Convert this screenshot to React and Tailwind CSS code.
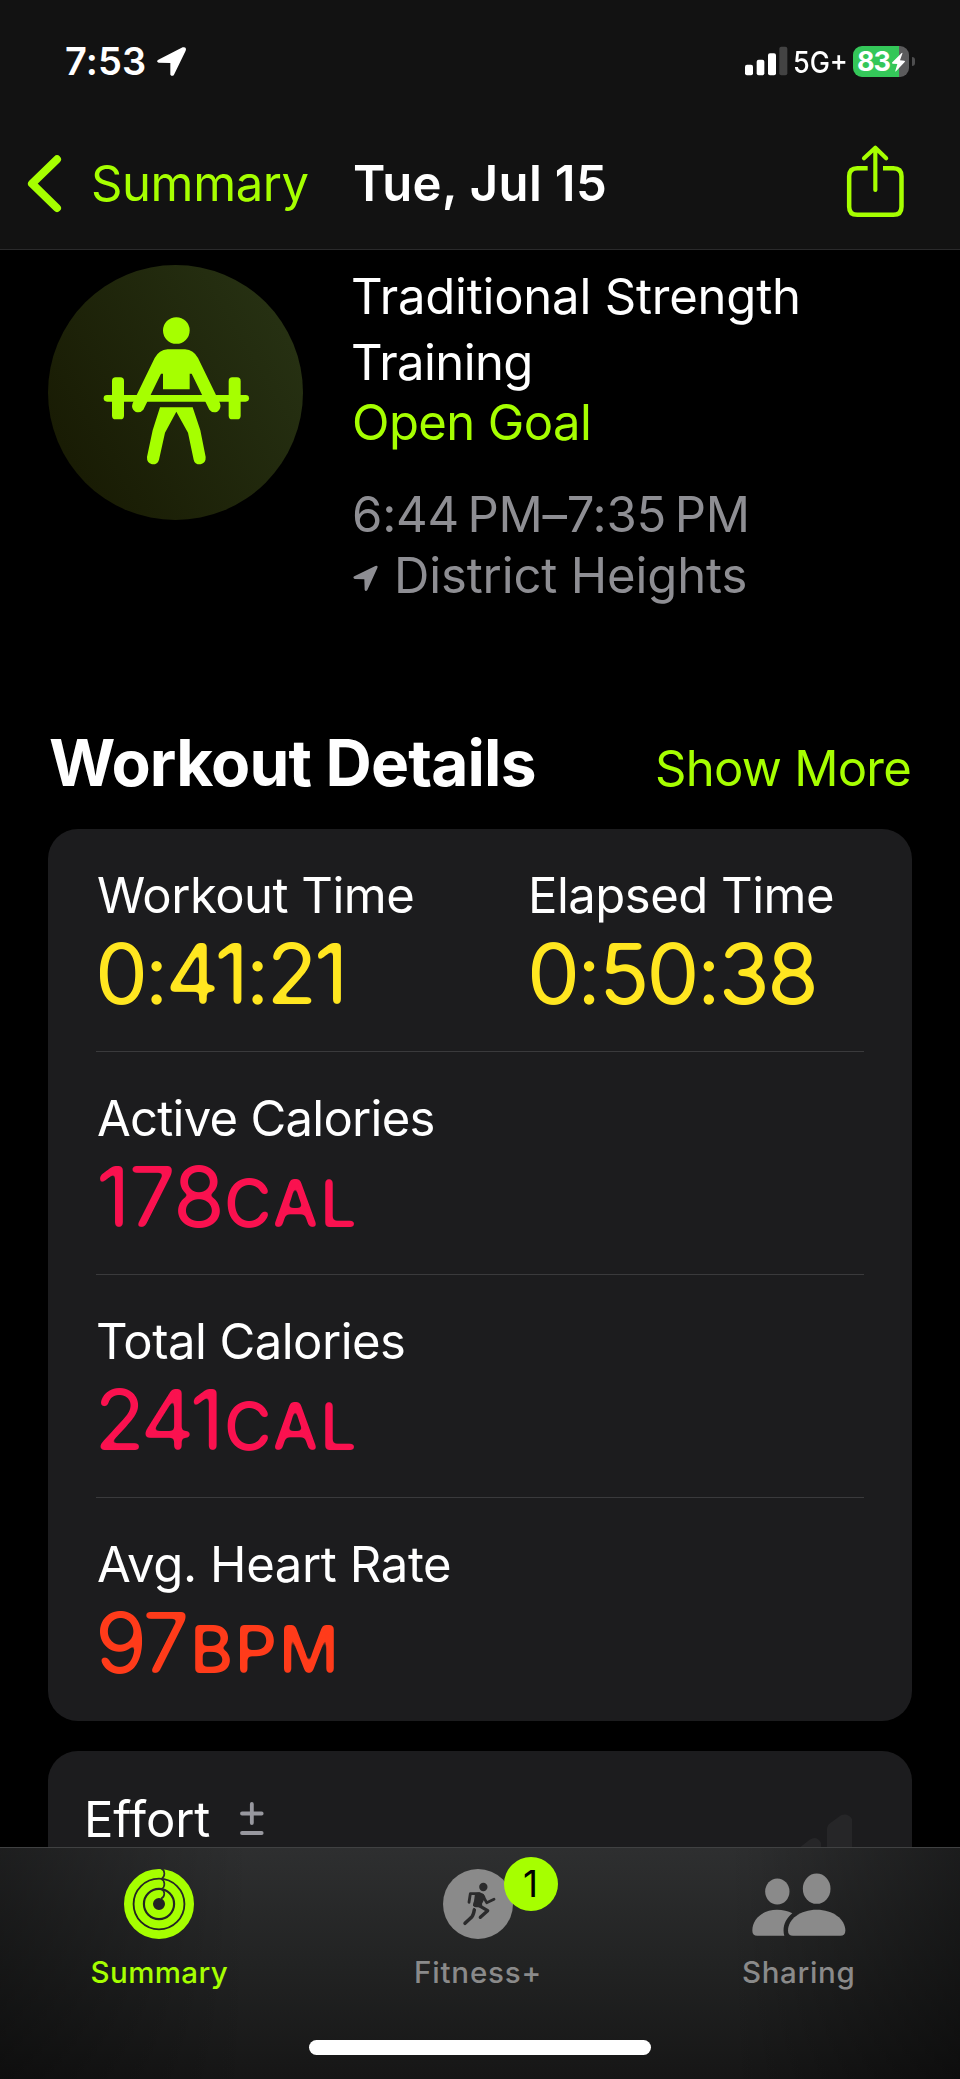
import React from "react";

/* Softens the corners of large glyphs into a rounded numeral style. */
function RoundedGlyphFilter() {
  return (
    <svg width="0" height="0" className="absolute" aria-hidden="true">
      <filter id="rounded" x="-5%" y="-10%" width="110%" height="120%" colorInterpolationFilters="sRGB">
        <feGaussianBlur stdDeviation="2.2" />
        <feComponentTransfer>
          <feFuncA type="linear" slope="6" intercept="-2.45" />
        </feComponentTransfer>
      </filter>
    </svg>
  );
}

function StatusBar() {
  return (
    <div className="flex h-[122px] items-center justify-between pr-[45px] pl-[65px]">
      <div className="flex items-center">
        <span className="text-[38px] leading-[48px] font-semibold tracking-[0.1px]">7:53</span>
        <svg className="ml-[10px]" width="31" height="31" viewBox="468 138 93 93" fill="#fff">
          <path d="M475 179 L548 142 Q561 139 557 152 L522 224 Q517 231 511 224 L511 189 L476 188 Q467 184 475 179Z" />
        </svg>
      </div>
      <div className="flex items-center">
        <svg width="43" height="31" viewBox="792 137 129 93" fill="#fff">
          <rect x="792" y="193" width="24" height="32" rx="6" />
          <rect x="827" y="178" width="23" height="47" rx="6" />
          <rect x="861" y="159" width="24" height="66" rx="6" />
          <rect x="895" y="139" width="24" height="86" rx="6" fill="#434343" />
        </svg>
        <span className="ml-[5px] w-[60px] origin-left scale-x-90 pt-[2px] text-[30px] leading-[48px] font-medium tracking-[0px]">5G+</span>
        <div className="relative flex h-[31px] w-[56px] items-center overflow-hidden rounded-[9px] bg-[linear-gradient(90deg,#34c759_0_46px,#5b5b5c_46px)]">
          <span className="pl-[4px] text-[27px] leading-[31px] font-bold tracking-[-1px]">83</span>
          <svg className="absolute top-[6px] left-[38px]" width="15" height="20" viewBox="1235 154 45 60" fill="#fff">
            <path d="M1267 157 Q1270 155 1269 159 L1262 179 L1275 180 Q1279 181 1276 184 L1250 212 Q1247 214 1248 210 L1254 190 L1240 189 Q1236 188 1239 185Z" />
          </svg>
        </div>
        <span className="ml-[3px] h-[9px] w-[3px] rounded-r-full bg-[#4e4e4f]" />
      </div>
    </div>
  );
}

function NavBar() {
  return (
    <div className="flex h-[122px] items-center pl-[27px]">
      <svg width="35" height="59" viewBox="81 459 105 177" fill="none" stroke="#a6ff00" strokeWidth="24" strokeLinecap="round" strokeLinejoin="round">
        <path d="M171 475 L96 548 L171 621" />
      </svg>
      <span className="ml-[29px] w-[262px] pt-[2px] text-[49px] leading-[60px] tracking-[-0.4px] whitespace-nowrap text-[#a6ff00]">Summary</span>
      <h1 className="flex-1 pt-[2px] text-[49px] leading-[60px] font-semibold tracking-[0.4px] whitespace-nowrap">Tue, Jul 15</h1>
      <svg className="mr-[55px] mb-1" width="59" height="75" viewBox="1098 432 177 225" fill="none" stroke="#a6ff00" strokeWidth="13.5" strokeLinejoin="round">
        <path d="M1163 504.500 H1132 Q1107.500 504.500 1107.500 529 V620 Q1107.500 644.500 1132 644.500 H1240 Q1264.500 644.500 1264.500 620 V529 Q1264.500 504.500 1240 504.500 H1209" />
        <path strokeLinecap="round" strokeWidth="12.500" d="M1186 570 V446 M1152 475 L1186 443 L1218.500 475" />
      </svg>
    </div>
  );
}

function LifterBadge() {
  return (
    <svg className="mt-[2px] shrink-0" width="255" height="255" viewBox="54 44 765 765" fill="#a6ff00">
      <defs>
        <linearGradient id="disc" x1="0.08" y1="0.75" x2="0.92" y2="0.25">
          <stop offset="0" stopColor="#191c04" />
          <stop offset="1" stopColor="#263012" />
        </linearGradient>
      </defs>
      <circle cx="436.500" cy="426.500" r="382.500" fill="url(#disc)" />
      <circle cx="439" cy="240.500" r="40" />
      <path d="M413 297 H465 Q491 299 504 323 L570 459 Q575 475 562 484 Q548 490 538 478 L485 370 H479 V417 H399 V370 H393 L340 478 Q330 490 316 484 Q302 475 308 459 L374 323 Q387 299 413 297Z" />
      <rect x="221" y="434" width="436" height="20" rx="10" />
      <rect x="246" y="381" width="36" height="126" rx="11" />
      <rect x="596" y="381" width="36" height="126" rx="11" />
      <path d="M390 471 H488 L511 540 L527 620 Q528 638 512 642 Q494 643 491 628 L474 547 L439 484 L405 547 L387 628 Q383 643 366 642 Q350 638 351 620 L368 540Z" />
    </svg>
  );
}

function Hero() {
  return (
    <section className="flex h-[355px] gap-[50px] pt-[13px] pl-[48px]">
      <LifterBadge />
      <div className="flex flex-col pt-px text-[49px] whitespace-nowrap">
        <h2 className="-ml-[2px] leading-[66px] tracking-[-0.2px]">
          Traditional Strength
          <br />
          <span className="tracking-[-0.6px]">Training</span>
        </h2>
        <p className="-ml-[1px] leading-[54px] tracking-[-0.59px] text-[#a6ff00]">Open Goal</p>
        <p className="mt-[35px] -ml-[1px] leading-[60px] tracking-[-0.25px] text-[#8e8e93]">6:44{"\u202f"}PM–7:35{"\u202f"}PM</p>
        <p className="flex items-center pt-px leading-[60px] tracking-[-0.13px] text-[#8e8e93]">
          <svg className="mt-[4px] mr-[16px]" width="25" height="27" viewBox="70 942 75 81" fill="#8e8e93">
            <path d="M74 976 L137 945 Q146 942 143 951 L113 1017 Q108 1024 105 1016 L104 985 L75 984 Q68 980 74 976Z" />
          </svg>
          District Heights
        </p>
      </div>
    </section>
  );
}

function Metric({ label, labelClass, value, unit, valueClass }) {
  return (
    <div className="flex flex-col items-start whitespace-nowrap">
      <span className={"text-[49px] leading-[60px] " + labelClass}>{label}</span>
      <span className={"flex items-baseline text-[84px] leading-[95px] [filter:url(#rounded)] " + valueClass}>
        {value}
        {unit}
      </span>
    </div>
  );
}

function WorkoutCard() {
  return (
    <div className="mx-[48px] h-[892px] rounded-[30px] bg-[#1c1c1e] px-[48px]">
      <div className="flex h-[223px] border-b border-[#3a3a3c] pt-[37px]">
        <div className="w-[432px] pl-[1px]">
          <Metric label="Workout Time" labelClass="tracking-[-0.5px]" value="0:41:21" valueClass="-ml-[2px] tracking-[-3.4px] text-[#ffe620]" />
        </div>
        <Metric label="Elapsed Time" labelClass="tracking-[-0.5px]" value="0:50:38" valueClass="-ml-[1px] tracking-[-2.9px] text-[#ffe620]" />
      </div>
      <div className="flex h-[223px] border-b border-[#3a3a3c] pt-[37px] pl-[1px]">
        <Metric
          label="Active Calories"
          labelClass="tracking-[-0.74px]"
          value={<span className="-ml-[1px] w-[128px] tracking-[-1.8px]">178</span>}
          unit={<span className="text-[66px] leading-none font-medium tracking-[1.1px]">CAL</span>}
          valueClass="text-[#fa114f]"
        />
      </div>
      <div className="flex h-[223px] border-b border-[#3a3a3c] pt-[37px]">
        <Metric
          label="Total Calories"
          labelClass="tracking-[-0.52px]"
          value={<span className="-ml-[2px] w-[130px] tracking-[-3.4px]">241</span>}
          unit={<span className="text-[66px] leading-none font-medium tracking-[1.1px]">CAL</span>}
          valueClass="text-[#fa114f]"
        />
      </div>
      <div className="flex h-[223px] pt-[37px] pl-[1px]">
        <Metric
          label="Avg. Heart Rate"
          labelClass="tracking-[-0.38px]"
          value={<span className="-ml-[2px] w-[95px] tracking-[-3.4px]">97</span>}
          unit={<span className="text-[66px] leading-none font-medium tracking-[1.5px]">BPM</span>}
          valueClass="text-[#ff3b1a]"
        />
      </div>
    </div>
  );
}

function EffortCard() {
  return (
    <div className="mx-[48px] mt-[30px] flex h-[96px] items-start rounded-t-[30px] bg-[#1c1c1e] pt-[38px] pl-[36px]">
      <span className="pt-[5px] text-[49px] leading-[52px] tracking-[-0.15px]">Effort</span>
      <svg className="mt-[11px] ml-[28px]" width="28" height="38" viewBox="714 180 84 114" fill="none" stroke="#98989f" strokeWidth="11.500" strokeLinecap="round">
        <path d="M726 220.500 H785 M755.500 192 V249 M726 279 H785" />
      </svg>
      <svg className="mt-[22px] mr-[58px] ml-auto" width="60" height="36" viewBox="942 333 180 108" fill="#262628">
        <path d="M1041 573 V388 Q1041 376 1051 369 L1083 346 Q1103 337 1116 357 V573Z" />
        <path d="M942 573 V456 L989 419 Q1010 405 1023 428 V573Z" />
      </svg>
    </div>
  );
}

function RingsIcon() {
  return (
    <svg width="70" height="70" viewBox="375 387 210 210" fill="none" stroke="#a6ff00">
      <circle cx="480" cy="492" r="92" strokeWidth="26" />
      <circle cx="480" cy="492" r="61" strokeWidth="25" />
      <circle cx="480" cy="492" r="30" strokeWidth="24" />
      <g stroke="#2a2b2b" strokeWidth="5">
        <path d="M487 386 C499 390 499 410 488 416" />
        <path d="M487 417 C499 422 499 441 488 447" />
        <path d="M487 448 C499 453 499 470 486 476" />
      </g>
    </svg>
  );
}

function RunnerIcon() {
  return (
    <svg width="70" height="70" viewBox="131 87 210 210" fill="none" stroke="#2b2b2c" strokeLinecap="round" strokeLinejoin="round">
      <circle cx="236" cy="192" r="105" fill="#8a8a8a" stroke="none" />
      <circle cx="252" cy="141" r="12.500" fill="#2b2b2c" stroke="none" />
      <path strokeWidth="8.500" d="M240 161 H213 L209 187" />
      <path strokeWidth="8.500" d="M250 166 L262 188 L284 178" />
      <path fill="#2b2b2c" strokeWidth="4" d="M229 161 Q248 156 256 171 L246 191 L247 200 L224 200 Q221 196 226 184Z" />
      <path strokeWidth="10" d="M233 193 L265 212 L243 232" />
      <path strokeWidth="10.500" d="M225 209 Q222 228 214 234 L197 250" />
      <path strokeWidth="3" stroke="#8a8a8a" d="M219 198 L233 207" />
    </svg>
  );
}

function SharingIcon() {
  return (
    <svg width="94" height="63" viewBox="815 517 282 189" fill="#8a8a8a">
      <ellipse cx="891" cy="572.500" rx="36.500" ry="39" />
      <ellipse cx="1009" cy="564" rx="41.500" ry="45.500" />
      <path d="M923 690 C923 655 960 627 1009 627 S1095 655 1095 690 Q1095 705 1080 705 H938 Q923 705 923 690Z" />
      <path d="M816 690 C816 652 850 627 890 627 C908 627 923 631 936 638 C914 655 905 682 912 705 H831 Q816 705 816 690Z" />
    </svg>
  );
}

function Tab({ icon, label, className }) {
  return (
    <div className={"flex flex-1 flex-col items-center text-[29.5px] leading-[40px] font-medium " + className}>
      <div className="relative flex h-[70px] items-center">{icon}</div>
      <span className="mt-[13px]">{label}</span>
    </div>
  );
}

function TabBar() {
  return (
    <footer className="flex h-[232px] shrink-0 flex-col border-t border-[#404142] bg-[linear-gradient(90deg,rgba(0,0,0,0.36),transparent_26%,transparent_76%,rgba(0,0,0,0.4)),linear-gradient(180deg,#2e2f30,#222323_50%,#161616)]">
      <nav className="flex h-[192px] pt-[21px] pr-[2px]">
        <Tab icon={<RingsIcon />} label="Summary" className="tracking-[0.4px] text-[#a6ff00]" />
        <Tab
          icon={
            <>
              <RunnerIcon />
              <span className="absolute -top-[12px] left-[61px] flex size-[54px] items-center justify-center rounded-full bg-[#a6ff00] text-[37px] leading-[54px] font-normal text-black">1</span>
            </>
          }
          label="Fitness+"
          className="tracking-[0.8px] text-[#8a8a8a]"
        />
        <Tab icon={<SharingIcon />} label="Sharing" className="pl-[2px] tracking-[0.66px] text-[#8a8a8a]" />
      </nav>
      <div className="mx-auto h-[15px] w-[342px] rounded-full bg-white" />
    </footer>
  );
}

export default function App() {
  return (
    <div className="flex h-[2079px] w-[960px] flex-col overflow-hidden bg-black font-['Inter',sans-serif] text-white">
      <RoundedGlyphFilter />
      <header className="h-[250px] shrink-0 border-b border-[#2a2a2b] bg-[#121212]">
        <StatusBar />
        <NavBar />
      </header>
      <main className="min-h-0 flex-1">
        <Hero />
        <div className="mt-[118px] mb-[26px] flex items-baseline justify-between pr-[49px] pl-[49px]">
          <h2 className="text-[64px] leading-[80px] font-bold tracking-[-0.8px]">Workout Details</h2>
          <span className="text-[49px] leading-[60px] tracking-[-0.75px] text-[#a6ff00]">Show More</span>
        </div>
        <WorkoutCard />
        <EffortCard />
      </main>
      <TabBar />
    </div>
  );
}
